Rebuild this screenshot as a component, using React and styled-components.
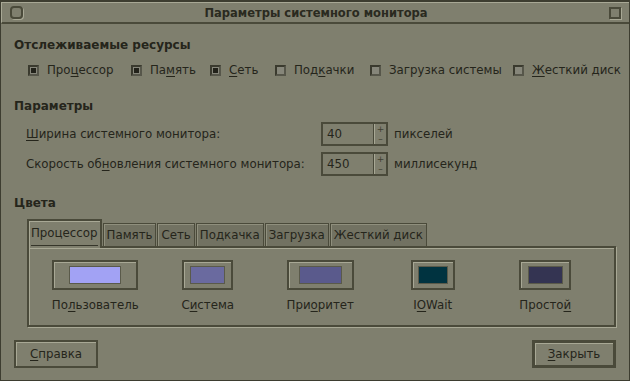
import React from 'react';
import styled, { createGlobalStyle } from 'styled-components';

const BG = '#7f7f6e';
const DARK = '#4a4a3a';
const LIGHT = '#a8a895';
const INK = '#25251b';

const GlobalStyle = createGlobalStyle`
  html, body { margin: 0; padding: 0; background: ${BG}; }
  body {
    font-family: "DejaVu Sans", "Liberation Sans", sans-serif;
    font-size: 11.8px;
    color: ${INK};
  }
`;

const Window = styled.div`
  width: 630px;
  height: 381px;
  box-sizing: border-box;
  border: 1px solid #3d3d30;
  border-top-width: 2px;
  display: flex;
  flex-direction: column;
  background: ${BG};
  white-space: nowrap;
`;

const TitleBar = styled.div`
  height: 22px;
  box-sizing: border-box;
  border-top: 1px solid ${LIGHT};
  border-left: 1px solid ${LIGHT};
  border-bottom: 2px solid ${DARK};
  display: flex;
  align-items: center;
  justify-content: space-between;
  padding: 0 8px 0 8px;
`;

const TitleText = styled.div`
  font-weight: bold;
  font-size: 11.5px;
  color: #2a2a20;
`;

const MenuIcon = styled.div`
  width: 13px;
  height: 13px;
  box-sizing: border-box;
  border: 2px solid ${DARK};
  border-radius: 4px;
  box-shadow: 1px 1px 0 ${LIGHT};
`;

const MaxIcon = styled.div`
  width: 12px;
  height: 12px;
  box-sizing: border-box;
  border: 2px solid ${DARK};
  box-shadow: 1px 1px 0 ${LIGHT};
`;

const Body = styled.div`
  flex: 1;
  display: flex;
  flex-direction: column;
  padding: 14px 13px 0 13px;
`;

const SectionTitle = styled.div`
  font-weight: bold;
  font-size: 12px;
  line-height: 15px;
  margin-top: ${p => p.$top || 0}px;
`;

const CheckRow = styled.div`
  display: flex;
  margin: 10px 0 0 14px;
  line-height: 15px;
`;

const CheckItem = styled.label`
  display: flex;
  align-items: center;
  gap: 8px;
  width: ${p => (p.$w ? `${p.$w}px` : 'auto')};
  flex: none;
`;

const Box = styled.span`
  width: 11px;
  height: 11px;
  box-sizing: border-box;
  border: 2px solid #3a3a2e;
  border-right-color: #56564a;
  border-bottom-color: #56564a;
  background: #86867a;
  display: flex;
  align-items: center;
  justify-content: center;
  &::after {
    content: '';
    width: 5px;
    height: 5px;
    background: ${p => (p.$on ? '#22221a' : 'transparent')};
  }
`;

const U = styled.span`
  text-decoration: underline;
  text-underline-offset: 2px;
  text-decoration-thickness: 1px;
`;

const ParamGrid = styled.div`
  display: grid;
  grid-template-columns: 295px 67px auto;
  row-gap: 6px;
  align-items: center;
  margin: 8px 0 0 12px;
`;

const Spin = styled.div`
  width: 67px;
  height: 24px;
  box-sizing: border-box;
  border: 2px solid ${DARK};
  display: flex;
`;

const SpinField = styled.div`
  flex: 1;
  padding-left: 4px;
  display: flex;
  align-items: center;
`;

const Stepper = styled.div`
  width: 11px;
  border-left: 1px solid ${DARK};
  box-shadow: inset 1px 0 0 ${LIGHT};
  display: flex;
  flex-direction: column;
  align-items: center;
  justify-content: space-between;
  font-size: 9px;
  line-height: 9px;
  color: #3e3e30;
  padding: 1px 0 0 1px;
`;

const Unit = styled.div`
  margin-left: 6px;
`;

const TabBar = styled.div`
  display: flex;
  align-items: flex-end;
  margin: 8px 0 -2px 13px;
  position: relative;
  z-index: 1;
`;

const Tab = styled.div`
  box-sizing: border-box;
  margin-right: 1px;
  ${p => p.$active ? `
    height: 29px;
    border: 2px solid ${DARK};
    border-bottom: none;
    box-shadow: inset 1px 1px 0 ${LIGHT};
    background: ${BG};
    padding: 5px 2px 0 2px;
  ` : `
    height: 23px;
    margin-bottom: 2px;
    border: 1px solid ${DARK};
    border-bottom: none;
    box-shadow: inset 1px 1px 0 #8f8f7d;
    background: #727262;
    padding: 0 3px;
    display: flex;
    align-items: center;
  `}
`;

const FocusLabel = styled.span`
  display: block;
  line-height: 15px;
  padding-bottom: 4px;
  border-bottom: 1px solid #35352a;
`;

const Panel = styled.div`
  margin-left: 13px;
  height: 81px;
  box-sizing: border-box;
  border: 2px solid ${DARK};
  box-shadow: inset 1px 1px 0 ${LIGHT}, 1px 1px 0 ${LIGHT};
  display: grid;
  grid-template-columns: repeat(5, 112.5px);
  padding: 12px 0 0 10px;
  align-content: start;
`;

const ColorCell = styled.div`
  display: flex;
  flex-direction: column;
  align-items: center;
`;

const SwatchFrame = styled.div`
  width: ${p => p.$w}px;
  height: 30px;
  box-sizing: border-box;
  border: 2px solid ${DARK};
  box-shadow: inset 1px 1px 0 ${LIGHT};
  display: flex;
  align-items: center;
  justify-content: center;
`;

const SwatchColor = styled.div`
  width: ${p => p.$w}px;
  height: 18px;
  box-sizing: border-box;
  border: 1px solid #5a5a4a;
  background: ${p => p.$color};
`;

const ColorLabel = styled.div`
  margin-top: 8px;
  line-height: 15px;
`;

const ButtonRow = styled.div`
  display: flex;
  justify-content: space-between;
  margin-top: 13px;
`;

const Button = styled.div`
  width: 84px;
  height: 28px;
  box-sizing: border-box;
  border: ${p => (p.$default ? 3 : 2)}px solid ${DARK};
  box-shadow: inset 1px 1px 0 ${LIGHT};
  display: flex;
  align-items: center;
  justify-content: center;
`;

const resources = [
  { on: true, w: 103, label: <>Про<U>ц</U>ессор</> },
  { on: true, w: 79, label: <>Па<U>м</U>ять</> },
  { on: true, w: 65, label: <><U>С</U>еть</> },
  { on: false, w: 95, label: <>Под<U>к</U>ачки</> },
  { on: false, w: 143, label: <>Загрузка системы</> },
  { on: false, label: <><U>Ж</U>есткий диск</> },
];

const tabs = ['Память', 'Сеть', 'Подкачка', 'Загрузка', 'Жесткий диск'];

const colors = [
  { label: <>По<U>л</U>ьзователь</>, frame: 86, inner: 52, color: '#a2a2f4' },
  { label: <>С<U>и</U>стема</>, frame: 51, inner: 35, color: '#6a6a9f' },
  { label: <>При<U>о</U>ритет</>, frame: 67, inner: 43, color: '#5a5a8c' },
  { label: <>I<U>O</U>Wait</>, frame: 44, inner: 30, color: '#003340' },
  { label: <>Просто<U>й</U></>, frame: 52, inner: 35, color: '#343452' },
];

export default function App() {
  return (
    <>
      <GlobalStyle />
      <Window>
        <TitleBar>
          <MenuIcon />
          <TitleText>Параметры системного монитора</TitleText>
          <MaxIcon />
        </TitleBar>
        <Body>
          <SectionTitle>Отслеживаемые ресурсы</SectionTitle>
          <CheckRow>
            {resources.map((r, i) => (
              <CheckItem key={i} $w={r.w}>
                <Box $on={r.on} />
                <span>{r.label}</span>
              </CheckItem>
            ))}
          </CheckRow>

          <SectionTitle $top={21}>Параметры</SectionTitle>
          <ParamGrid>
            <div><U>Ш</U>ирина системного монитора:</div>
            <Spin>
              <SpinField>40</SpinField>
              <Stepper><span>+</span><span>–</span></Stepper>
            </Spin>
            <Unit>пикселей</Unit>
            <div>Скорость об<U>н</U>овления системного монитора:</div>
            <Spin>
              <SpinField>450</SpinField>
              <Stepper><span>+</span><span>–</span></Stepper>
            </Spin>
            <Unit>миллисекунд</Unit>
          </ParamGrid>

          <SectionTitle $top={20}>Цвета</SectionTitle>
          <TabBar>
            <Tab $active><FocusLabel>Процессор</FocusLabel></Tab>
            {tabs.map(t => <Tab key={t}>{t}</Tab>)}
          </TabBar>
          <Panel>
            {colors.map((c, i) => (
              <ColorCell key={i}>
                <SwatchFrame $w={c.frame}>
                  <SwatchColor $w={c.inner} $color={c.color} />
                </SwatchFrame>
                <ColorLabel>{c.label}</ColorLabel>
              </ColorCell>
            ))}
          </Panel>

          <ButtonRow>
            <Button><span><U>С</U>правка</span></Button>
            <Button $default><span><U>З</U>акрыть</span></Button>
          </ButtonRow>
        </Body>
      </Window>
    </>
  );
}
